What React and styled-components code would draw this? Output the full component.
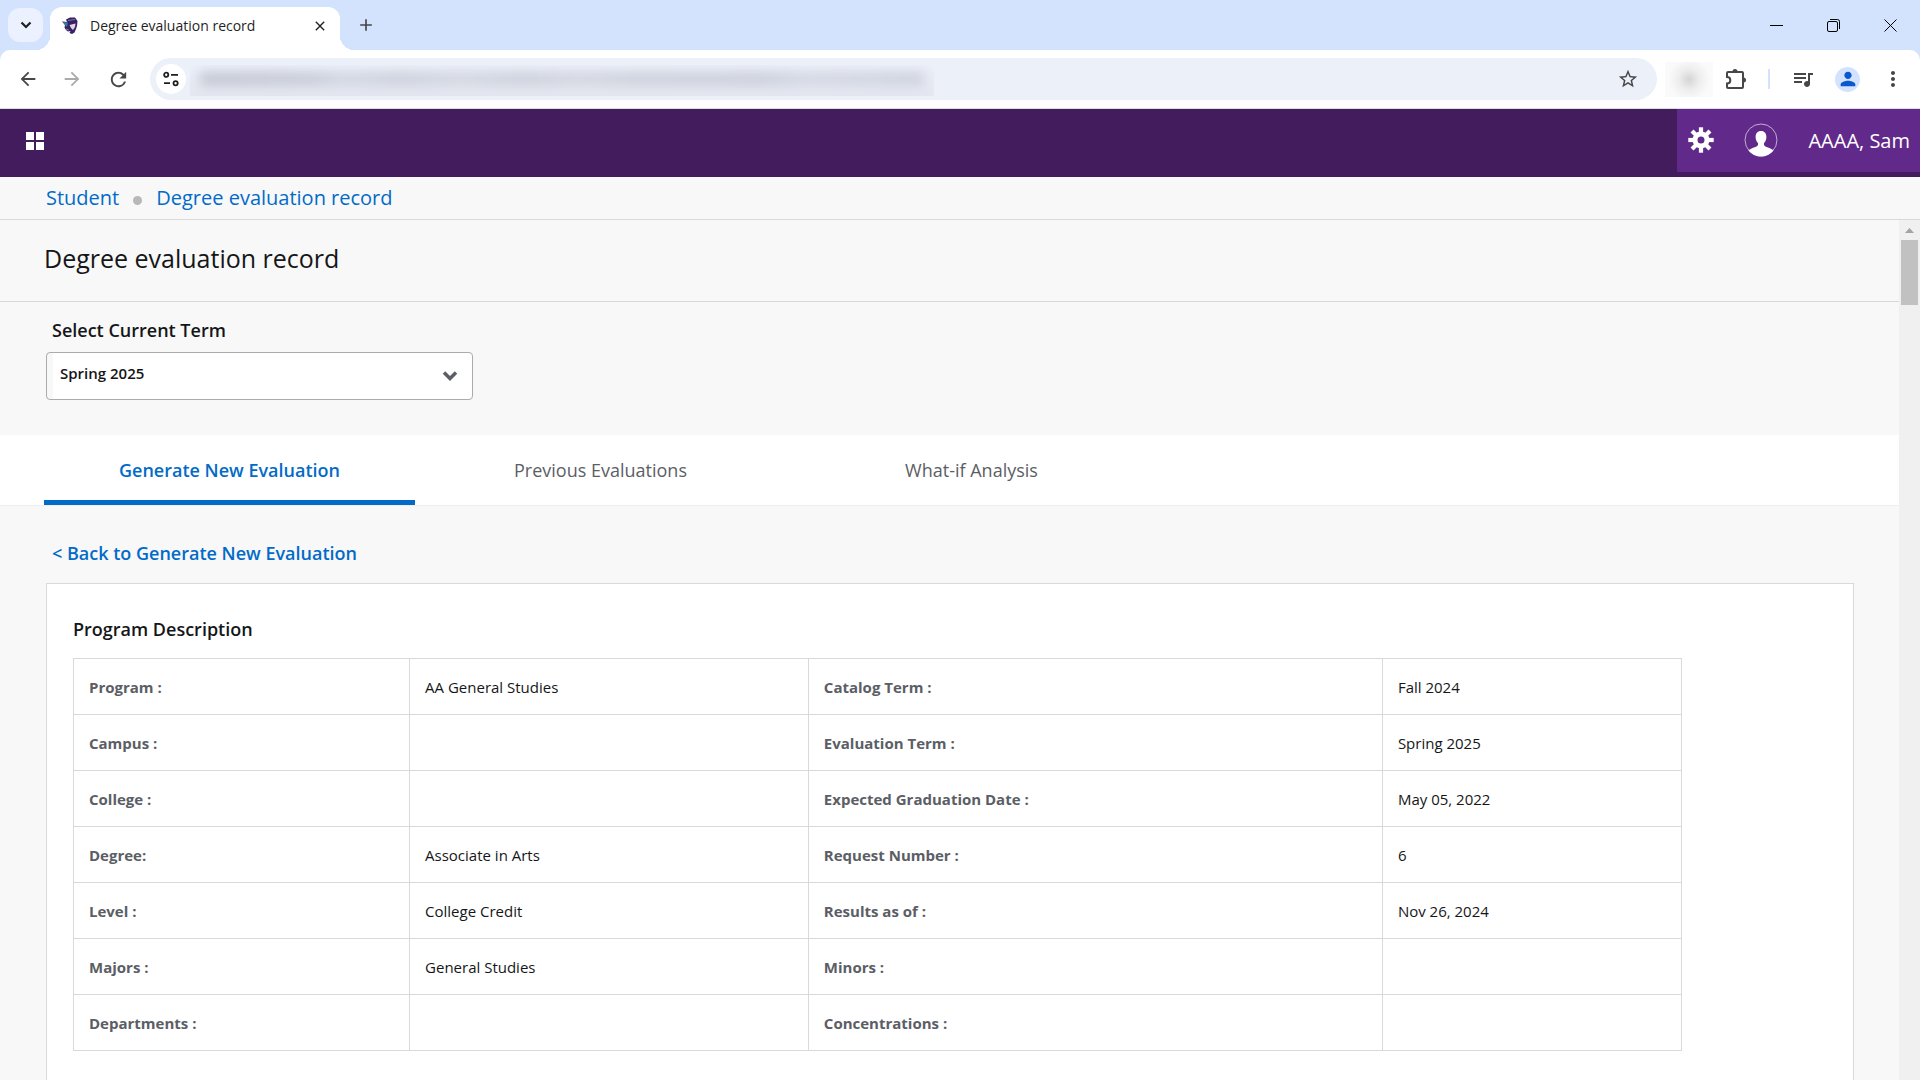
import React, { useState } from 'react';
import styled, { createGlobalStyle } from 'styled-components';
import {
  MdArrowBack,
  MdArrowForward,
  MdRefresh,
  MdStarBorder,
  MdQueueMusic,
  MdPerson,
  MdMoreVert,
  MdAdd,
  MdClose
} from 'react-icons/md';

const GlobalStyle = createGlobalStyle`
  *, *::before, *::after {
    box-sizing: border-box;
  }

  body {
    margin: 0;
    background-color: #f8f8f8;
    color: #151618;
    font-family: "Open Sans", "Noto Sans", sans-serif;
    font-size: 16px;
    overflow: hidden;
  }

  button {
    font: inherit;
    color: inherit;
    background: none;
    border: none;
    padding: 0;
    cursor: pointer;
  }

  svg {
    display: block;
    flex: none;
  }
`;

const Window = styled.div`
  display: flex;
  flex-direction: column;
  height: 100vh;
`;

/* Browser chrome */

const TabStrip = styled.div`
  display: flex;
  flex: none;
  height: 50px;
  padding-left: 8px;
  background-color: #d3e2fd;
`;

const TabSearch = styled.button`
  display: flex;
  align-items: center;
  justify-content: center;
  width: 35px;
  height: 34px;
  margin-top: 8px;
  border-radius: 12px;
  background-color: #ebf1fe;
`;

const BrowserTab = styled.div`
  position: relative;
  display: flex;
  align-items: center;
  width: 290px;
  height: 43px;
  margin: 7px 0 0 7px;
  padding: 0 10px 6px 12px;
  border-radius: 12px 12px 0 0;
  background-color: #fff;

  &::before,
  &::after {
    content: '';
    position: absolute;
    bottom: 0;
    width: 14px;
    height: 14px;
  }

  &::before {
    right: 100%;
    background: radial-gradient(circle at 0 0, transparent 14px, #fff 14px);
  }

  &::after {
    left: 100%;
    background: radial-gradient(circle at 100% 0, transparent 14px, #fff 14px);
  }
`;

const TabTitle = styled.span`
  flex: 1;
  margin-left: 12px;
  font-size: 14px;
  color: #1f1f1f;
  white-space: nowrap;
`;

const StripButton = styled.button`
  display: flex;
  align-items: center;
  justify-content: center;
  width: ${props => props.$width || 20}px;
  height: ${props => props.$height || 20}px;
  color: ${props => props.$color || '#1f1f1f'};
`;

const NewTab = styled(StripButton)`
  margin-left: 11px;
`;

const WindowControls = styled.div`
  display: flex;
  margin-left: auto;
  padding-right: 1px;
`;

const AddressRow = styled.div`
  background-color: #d3e2fd;
  flex: none;
`;

const Toolbar = styled.div`
  display: flex;
  align-items: center;
  height: 59px;
  padding: 0 5px 0 10px;
  border-bottom: 1px solid #dbe0e0;
  border-radius: 10px 10px 0 0;
  background-color: #fff;
`;

const ToolButton = styled.button`
  display: flex;
  align-items: center;
  justify-content: center;
  width: ${props => props.$width || 45}px;
  height: 36px;
  color: ${props => props.$color || '#474747'};
`;

const Omnibox = styled.div`
  display: flex;
  flex: 1;
  align-items: center;
  height: 42px;
  margin-left: 12px;
  padding: 0 7px 0 6px;
  border-radius: 21px;
  background-color: #ecf0f9;
`;

const BookmarkButton = styled(ToolButton)`
  margin-left: auto;
`;

const SiteInfo = styled.button`
  display: flex;
  align-items: center;
  justify-content: center;
  width: 30px;
  height: 30px;
  border-radius: 50%;
  background-color: #fff;
`;

const HiddenUrl = styled.div`
  width: 744px;
  height: 31px;
  margin: 2px 0 0 4px;
  overflow: hidden;
  background: linear-gradient(#ecf0f9, #e4e7f0);

  &::before {
    content: '';
    display: block;
    height: 14px;
    margin: 7px 10px;
    background: linear-gradient(to right, #c3c7d1, #c7cbd6 15%, #d2d6e0 20%, #ccd0db 28%, #d3d7e1 36%, #ccd0da 45%, #d3d6e0 52%, #cdd1db 60%, #cbcfda 78%, #d4d8e2 84%, #cdd1dc);
    filter: blur(6px);
  }
`;

const HiddenExtension = styled.div`
  width: 48px;
  height: 35px;
  margin-left: 8px;
  background: radial-gradient(circle at 50% 50%, #d5d5d5, #eeeeee 36%, #fafafb 70%);
`;

const ToolDivider = styled.span`
  width: 2px;
  height: 20px;
  margin: 0 10px;
  background-color: #d3e2fd;
`;

const Avatar = styled.span`
  display: flex;
  align-items: center;
  justify-content: center;
  width: 25px;
  height: 25px;
  border-radius: 50%;
  background-color: #d3e2fd;
  color: #0b57d0;
`;

/* Application header */

const AppHeader = styled.header`
  display: flex;
  flex: none;
  justify-content: space-between;
  height: 68px;
  padding-bottom: 5px;
  background-color: #431c5d;
  color: #fff;
`;

const MenuButton = styled.button`
  display: flex;
  align-items: center;
  padding: 0 26px;
`;

const UserArea = styled.div`
  display: flex;
  align-items: center;
  padding: 0 10px 1px 11px;
  background-color: #61298a;
  font-size: 20px;
`;

const UserButton = styled.button`
  display: flex;
  align-items: center;
  gap: 30px;
  margin-left: 30px;
`;

const Breadcrumbs = styled.nav`
  display: flex;
  flex: none;
  align-items: center;
  height: 43px;
  padding: 0 46px 2px;
  border-bottom: 1px solid #d9d9d9;
  font-size: 20px;
`;

const CrumbLink = styled.a`
  color: #026bc8;
  text-decoration: none;
`;

const CrumbDot = styled.span`
  width: 9px;
  height: 9px;
  margin: 6px 14px 0;
  border-radius: 50%;
  background-color: #b8b8b8;
`;

/* Page content */

const ScrollArea = styled.div`
  display: flex;
  flex: 1;
  min-height: 0;
`;

const Main = styled.main`
  flex: 1;
  min-width: 0;
  overflow: hidden;
`;

const ScrollTrack = styled.div`
  display: flex;
  flex-direction: column;
  align-items: center;
  width: 21px;
  padding-top: 8px;
  background-color: #f0f0f0;
`;

const ScrollThumb = styled.div`
  width: 17px;
  height: 65px;
  margin-top: 7px;
  background-color: #c1c1c1;
`;

const PageTitle = styled.h1`
  margin: 0;
  padding: 22px 44px 26px;
  border-bottom: 1px solid #d9d9d9;
  font-size: 25px;
  font-weight: 400;
  line-height: 33px;
`;

const TermSection = styled.section`
  display: flex;
  flex-direction: column;
  align-items: flex-start;
  padding: 15px 46px 35px;
`;

const TermLabel = styled.label`
  padding-left: 6px;
  font-size: 18px;
  font-weight: 600;
  line-height: 26px;
`;

const SelectWrap = styled.div`
  position: relative;
  width: 427px;
  margin-top: 9px;

  svg {
    position: absolute;
    top: 18px;
    right: 15px;
    pointer-events: none;
  }
`;

const TermSelect = styled.select`
  width: 100%;
  height: 48px;
  padding: 0 48px 6px 13px;
  border: 1px solid #a9abac;
  border-radius: 4px;
  background: linear-gradient(to right, #f8f8f8 6px, #fff 6px);
  color: #151618;
  font-family: inherit;
  font-size: 15px;
  font-weight: 600;
  appearance: none;
`;

const TabBar = styled.div`
  display: flex;
  height: 71px;
  padding-left: 44px;
  border-bottom: 1px solid #eeeeee;
  background-color: #fff;
`;

const TabButton = styled.button`
  width: 371px;
  border-top: 5px solid transparent;
  border-bottom: 5px solid ${props => (props.$active ? '#026bc8' : 'transparent')};
  color: ${props => (props.$active ? '#026bc8' : '#5b5e65')};
  font-size: 18px;
  font-weight: ${props => (props.$active ? 600 : 400)};
`;

const Content = styled.div`
  padding: 33px 45px 0 46px;
`;

const BackLink = styled.a`
  display: inline-block;
  padding-left: 6px;
  color: #026bc8;
  font-size: 18px;
  font-weight: 600;
  line-height: 28px;
  text-decoration: none;
`;

const Card = styled.section`
  min-height: 600px;
  margin-top: 16px;
  padding: 31px 26px;
  border: 1px solid #d9d9d9;
  background-color: #fff;
`;

const CardTitle = styled.h2`
  margin: 0 0 15px;
  font-size: 18px;
  font-weight: 600;
  line-height: 28px;
`;

const ProgramTable = styled.table`
  width: calc(100% - 145px);
  table-layout: fixed;
  border-collapse: collapse;
  font-size: 15px;

  th,
  td {
    height: 56px;
    padding: 0 15px;
    border: 1px solid #d9d9d9;
    text-align: left;
  }

  th {
    color: #5b5e65;
    font-weight: 700;
  }
`;

const Col = styled.col`
  width: ${props => props.$share}%;
`;

const programRows = [
  ['Program :', 'AA General Studies', 'Catalog Term :', 'Fall 2024'],
  ['Campus :', '', 'Evaluation Term :', 'Spring 2025'],
  ['College :', '', 'Expected Graduation Date :', 'May 05, 2022'],
  ['Degree:', 'Associate in Arts', 'Request Number :', '6'],
  ['Level :', 'College Credit', 'Results as of :', 'Nov 26, 2024'],
  ['Majors :', 'General Studies', 'Minors :', ''],
  ['Departments :', '', 'Concentrations :', '']
];

const tabs = ['Generate New Evaluation', 'Previous Evaluations', 'What-if Analysis'];

const Favicon = () => (
  <svg width="16" height="18" viewBox="0 0 16 18">
    <path d="M0 4.5 5 5 4 2.500 8 0.500 13 0.500 15.500 4 15 9 14 12 12.500 15.500 10 17 7.500 16 8.500 14 6 14.500 4 13 2.500 10.500 3 8z" fill="#3b1f63" />
    <path d="M1 5 6 5.500 5 10 3 8z" fill="#2f7f98" />
    <path d="M7.500 8 13.500 6.500 13 10 11 13 9 11z" fill="#d9d7e6" />
    <path d="M6 3.500 13 2.500M4 12l3 1" stroke="#6d7fae" />
  </svg>
);

const TuneIcon = () => (
  <svg width="16" height="16" viewBox="0 0 16 16" fill="none" stroke="#1f1f1f" strokeWidth="1.8">
    <circle cx="3.2" cy="3.8" r="2.1" />
    <path d="M8 3.800h7M1 12.200h6" />
    <circle cx="12.6" cy="12.2" r="2.1" />
  </svg>
);

const PuzzleIcon = () => (
  <svg width="22" height="22" viewBox="0 0 22 22" fill="none" stroke="#474747" strokeWidth="2">
    <path d="M3 4h14a1 1 0 0 1 1 1v14a1 1 0 0 1-1 1H3a1 1 0 0 1-1-1v-3.500c2.200 0 3.300-1.500 3.300-3.300S4.200 9 2 9V5a1 1 0 0 1 1-1z" />
    <path d="M7.500 3.500a2.500 2.500 0 0 1 5 0zM18.500 9.500a2.500 2.500 0 0 1 0 5z" fill="#474747" stroke="none" />
  </svg>
);

const GearIcon = () => (
  <svg width="26" height="26" viewBox="0 0 26 26" fill="none" stroke="#fff">
    <circle cx="13" cy="13" r="6" strokeWidth="5" />
    {[0, 45, 90, 135, 180, 225, 270, 315].map(angle => (
      <path key={angle} d="M13 0.300V6" strokeWidth="4.2" transform={`rotate(${angle} 13 13)`} />
    ))}
  </svg>
);

const ProfileIcon = () => (
  <svg width="34" height="34" viewBox="0 0 34 34">
    <circle cx="17" cy="17" r="16" fill="none" stroke="#c3aed3" />
    <path
      d="M17 8c3.600 0 5.400 2.600 5.400 6 0 2.600-1 4.800-2.400 6v2c1 2.300 6.500 2.600 9.500 5.400C26.500 31 22 33.500 17 33.500S7.500 31 4.500 27.400C7.500 24.600 13 24.300 14 22v-2c-1.400-1.200-2.400-3.400-2.400-6 0-3.400 1.800-6 5.400-6z"
      fill="#fff"
    />
  </svg>
);

function BrowserChrome() {
  return (
    <>
      <TabStrip>
        <TabSearch aria-label="Search tabs">
          <svg width="12" height="8" viewBox="0 0 12 8" fill="none" stroke="#1f1f1f" strokeWidth="2.2">
            <path d="M1.500 1.500 6 6l4.500-4.500" />
          </svg>
        </TabSearch>
        <BrowserTab>
          <Favicon />
          <TabTitle>Degree evaluation record</TabTitle>
          <StripButton aria-label="Close tab">
            <MdClose size={16} />
          </StripButton>
        </BrowserTab>
        <NewTab aria-label="New tab" $width={30} $height={50} $color="#474747">
          <MdAdd size={20} />
        </NewTab>
        <WindowControls>
          <StripButton aria-label="Minimize" $width={57} $height={50}>
            <svg width="13" height="13" viewBox="0 0 13 13" stroke="#000">
              <path d="M0 6.500h13" />
            </svg>
          </StripButton>
          <StripButton aria-label="Restore" $width={57} $height={50}>
            <svg width="13" height="13" viewBox="0 0 13 13" fill="none" stroke="#000">
              <rect x="0.5" y="2.5" width="10" height="10" rx="1.5" />
              <path d="M3 0.500h7.500a2 2 0 0 1 2 2V10" />
            </svg>
          </StripButton>
          <StripButton aria-label="Close" $width={57} $height={50}>
            <svg width="13" height="13" viewBox="0 0 13 13" stroke="#000">
              <path d="M0.500 0.500l12 12M12.500 0.500l-12 12" />
            </svg>
          </StripButton>
        </WindowControls>
      </TabStrip>
      <AddressRow>
        <Toolbar>
          <ToolButton aria-label="Back" $width={36}><MdArrowBack size={22} /></ToolButton>
          <ToolButton aria-label="Forward" $width={52} $color="#ababab"><MdArrowForward size={22} /></ToolButton>
          <ToolButton aria-label="Reload" $width={40}><MdRefresh size={23} /></ToolButton>
          <Omnibox>
            <SiteInfo aria-label="View site information"><TuneIcon /></SiteInfo>
            <HiddenUrl />
            <BookmarkButton aria-label="Bookmark">
              <MdStarBorder size={22} />
            </BookmarkButton>
          </Omnibox>
          <HiddenExtension />
          <ToolButton aria-label="Extensions"><PuzzleIcon /></ToolButton>
          <ToolDivider />
          <ToolButton aria-label="Media"><MdQueueMusic size={24} /></ToolButton>
          <ToolButton aria-label="Profile"><Avatar><MdPerson size={22} /></Avatar></ToolButton>
          <ToolButton aria-label="More"><MdMoreVert size={24} /></ToolButton>
        </Toolbar>
      </AddressRow>
    </>
  );
}

function App() {
  const [activeTab, setActiveTab] = useState(tabs[0]);

  return (
    <Window>
      <GlobalStyle />
      <BrowserChrome />
      <AppHeader>
        <MenuButton aria-label="Menu">
          <svg width="18" height="18" viewBox="0 0 18 18" fill="#fff">
            <path d="M0 0h8v8H0zM10 0h8v8h-8zM0 10h8v8H0zM10 10h8v8h-8z" />
          </svg>
        </MenuButton>
        <UserArea>
          <button aria-label="Settings"><GearIcon /></button>
          <UserButton>
            <ProfileIcon />
            AAAA, Sam
          </UserButton>
        </UserArea>
      </AppHeader>
      <Breadcrumbs aria-label="Breadcrumb">
        <CrumbLink href="#student">Student</CrumbLink>
        <CrumbDot />
        <CrumbLink href="#record">Degree evaluation record</CrumbLink>
      </Breadcrumbs>
      <ScrollArea>
        <Main>
          <PageTitle>Degree evaluation record</PageTitle>
          <TermSection>
            <TermLabel htmlFor="term">Select Current Term</TermLabel>
            <SelectWrap>
              <TermSelect id="term" defaultValue="Spring 2025">
                <option>Spring 2025</option>
              </TermSelect>
              <svg width="16" height="12" viewBox="0 0 16 12" fill="none" stroke="#5b5e65" strokeWidth="3.5">
                <path d="M2 2.500 8 8.500l6-6" />
              </svg>
            </SelectWrap>
          </TermSection>
          <TabBar role="tablist">
            {tabs.map(tab => (
              <TabButton
                key={tab}
                role="tab"
                aria-selected={tab === activeTab}
                $active={tab === activeTab}
                onClick={() => setActiveTab(tab)}
              >
                {tab}
              </TabButton>
            ))}
          </TabBar>
          <Content>
            <BackLink href="#generate">&lt; Back to Generate New Evaluation</BackLink>
            <Card>
              <CardTitle>Program Description</CardTitle>
              <ProgramTable>
                <colgroup>
                  <Col $share={20.9} />
                  <Col $share={24.8} />
                  <Col $share={35.7} />
                  <Col $share={18.6} />
                </colgroup>
                <tbody>
                  {programRows.map(([label, value, secondLabel, secondValue]) => (
                    <tr key={label}>
                      <th scope="row">{label}</th>
                      <td>{value}</td>
                      <th scope="row">{secondLabel}</th>
                      <td>{secondValue}</td>
                    </tr>
                  ))}
                </tbody>
              </ProgramTable>
            </Card>
          </Content>
        </Main>
        <ScrollTrack>
          <svg width="9" height="5" viewBox="0 0 9 5" fill="#a3a3a3">
            <path d="M0 5 4.500 0 9 5z" />
          </svg>
          <ScrollThumb />
        </ScrollTrack>
      </ScrollArea>
    </Window>
  );
}

export default App;
